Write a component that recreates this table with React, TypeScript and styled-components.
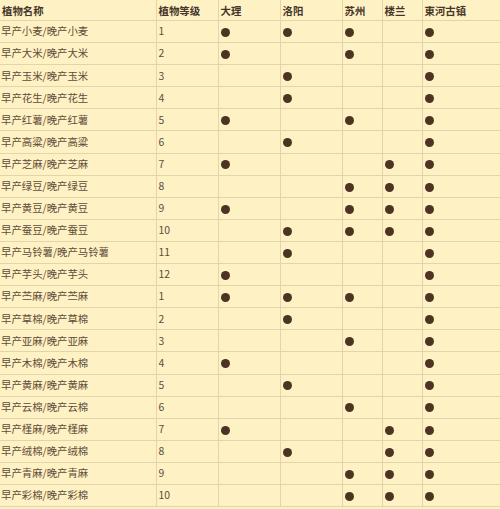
import React from 'react';
import styled, { createGlobalStyle } from 'styled-components';

const GlobalStyle = createGlobalStyle`
  html, body {
    margin: 0;
    padding: 0;
    background: #fef1c4;
    overflow: hidden;
  }
`;

const Wrapper = styled.div`
  width: 500px;
  height: 509px;
  overflow: hidden;
  background: #fef1c4;
`;

const Table = styled.table`
  border-collapse: collapse;
  table-layout: fixed;
  width: 560px;
  font-family: "Noto Sans CJK SC", "DejaVu Sans", sans-serif;
  font-size: 10.4px;
  color: #5e4d39;
`;

const HeadCell = styled.th`
  height: 20px;
  padding: 0 0 0 2px;
  text-align: left;
  font-weight: bold;
  color: #46362a;
  border-bottom: 1px solid #e2d5ab;
  border-left: 1px solid #e2d5ab;
  &:first-child {
    border-left: none;
  }
`;

const Cell = styled.td`
  height: 21.1px;
  padding: 0 0 0 2px;
  line-height: 1;
  border-bottom: 1px solid #e2d5ab;
  border-left: 1px solid #e2d5ab;
  &:first-child {
    border-left: none;
    padding-left: 1px;
  }
`;

const Dot = styled.span`
  display: inline-block;
  width: 9px;
  height: 9px;
  border-radius: 50%;
  background: #4c3322;
  vertical-align: middle;
  margin-left: 0px;
`;

const places = ['大理', '洛阳', '苏州', '楼兰', '東河古镇'];
const widths = [156, 62, 62, 62, 40, 40, 138];

type Row = { name: string; level: number; at: number[] };

const rows: Row[] = [
  { name: '小麦', level: 1, at: [0, 1, 2, 4] },
  { name: '大米', level: 2, at: [0, 2, 4] },
  { name: '玉米', level: 3, at: [1, 4] },
  { name: '花生', level: 4, at: [1, 4] },
  { name: '红薯', level: 5, at: [0, 2, 4] },
  { name: '高粱', level: 6, at: [1, 4] },
  { name: '芝麻', level: 7, at: [0, 3, 4] },
  { name: '绿豆', level: 8, at: [2, 3, 4] },
  { name: '黄豆', level: 9, at: [0, 2, 3, 4] },
  { name: '蚕豆', level: 10, at: [1, 2, 3, 4] },
  { name: '马铃薯', level: 11, at: [1, 4] },
  { name: '芋头', level: 12, at: [0, 4] },
  { name: '苎麻', level: 1, at: [0, 1, 2, 4] },
  { name: '草棉', level: 2, at: [1, 4] },
  { name: '亚麻', level: 3, at: [2, 4] },
  { name: '木棉', level: 4, at: [0, 4] },
  { name: '黄麻', level: 5, at: [1, 4] },
  { name: '云棉', level: 6, at: [2, 4] },
  { name: '槿麻', level: 7, at: [0, 3, 4] },
  { name: '绒棉', level: 8, at: [1, 3, 4] },
  { name: '青麻', level: 9, at: [2, 3, 4] },
  { name: '彩棉', level: 10, at: [2, 3, 4] },
];

const App = () => {
  return (
    <Wrapper>
      <GlobalStyle />
      <Table>
        <colgroup>
          {widths.map((w, i) => (
            <col key={i} style={{ width: w }} />
          ))}
        </colgroup>
        <thead>
          <tr>
            <HeadCell>植物名称</HeadCell>
            <HeadCell>植物等级</HeadCell>
            {places.map((p) => (
              <HeadCell key={p}>{p}</HeadCell>
            ))}
          </tr>
        </thead>
        <tbody>
          {rows.map((r) => (
            <tr key={r.name}>
              <Cell>早产{r.name}/晚产{r.name}</Cell>
              <Cell>{r.level}</Cell>
              {places.map((p, i) => (
                <Cell key={p}>{r.at.includes(i) && <Dot />}</Cell>
              ))}
            </tr>
          ))}
        </tbody>
      </Table>
    </Wrapper>
  );
};

export default App;
